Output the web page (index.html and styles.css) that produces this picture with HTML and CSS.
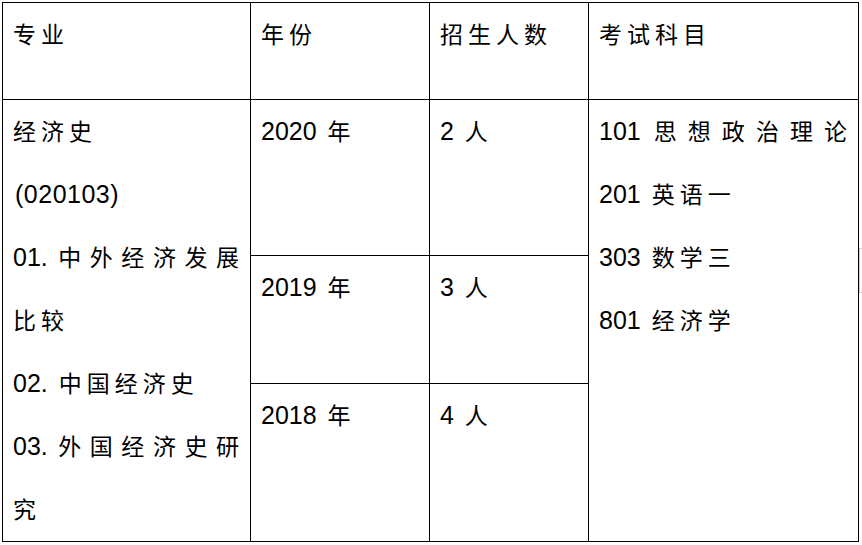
FILE: index.html
```html
<!DOCTYPE html>
<html lang="zh-CN">
<head>
<meta charset="utf-8">
<title>招生计划</title>
<link rel="stylesheet" href="styles.css">
</head>
<body>
<table class="plan">
  <colgroup>
    <col class="c-major">
    <col class="c-year">
    <col class="c-count">
    <col class="c-exam">
  </colgroup>
  <thead>
    <tr class="r-head">
      <th><span class="zh">专业</span></th>
      <th><span class="zh">年份</span></th>
      <th><span class="zh">招生人数</span></th>
      <th><span class="zh">考试科目</span></th>
    </tr>
  </thead>
  <tbody>
    <tr class="r-2020">
      <td rowspan="3" class="major">
        <p><span class="zh">经济史</span></p>
        <p class="code">(020103)</p>
        <p class="wrap">01. <span class="zh">中外经济发展比较</span></p>
        <p>02. <span class="zh gap">中国经济史</span></p>
        <p class="wrap">03. <span class="zh">外国经济史研究</span></p>
      </td>
      <td><p>2020 <span class="zh gap">年</span></p></td>
      <td><p>2 <span class="zh gap">人</span></p></td>
      <td rowspan="3" class="exam">
        <p class="just">101 <span class="zh">思想政治理论</span></p>
        <p>201 <span class="zh gap">英语一</span></p>
        <p>303 <span class="zh gap">数学三</span></p>
        <p>801 <span class="zh gap">经济学</span></p>
      </td>
    </tr>
    <tr class="r-2019">
      <td><p>2019 <span class="zh gap">年</span></p></td>
      <td><p>3 <span class="zh gap">人</span></p></td>
    </tr>
    <tr class="r-2018">
      <td><p>2018 <span class="zh gap">年</span></p></td>
      <td><p>4 <span class="zh gap">人</span></p></td>
    </tr>
  </tbody>
</table>
<div class="mark mark-side"></div>
<div class="mark mark-foot"></div>
</body>
</html>
```

FILE: styles.css
```css
html, body {
  margin: 0;
  padding: 0;
  background: #ffffff;
}

body {
  padding: 2px 0 0 2px;
  font-family: "Liberation Sans", "Noto Sans CJK SC", sans-serif;
  font-size: 25px;
  color: #000000;
  position: relative;
  height: 543px;
  overflow: hidden;
  box-sizing: border-box;
}

.plan {
  border-collapse: collapse;
  table-layout: fixed;
  width: 856px;
}

.c-major { width: 248px; }
.c-year { width: 179px; }
.c-count { width: 159px; }
.c-exam { width: 270px; }

.plan th,
.plan td {
  border: 1px solid #000000;
  vertical-align: top;
  text-align: left;
  font-weight: normal;
  padding: 0 6px 0 10px;
  line-height: 63px;
}

.plan p {
  margin: 0;
}

.zh {
  font-family: "Noto Sans CJK SC", sans-serif;
  font-size: 23px;
  letter-spacing: 5px;
  line-height: 1;
}

.gap {
  margin-left: 4px;
}

.code {
  padding-left: 2px;
  letter-spacing: 0.5px;
}

.r-head th { height: 96px; }
.r-2020 td { height: 155px; }
.r-2019 td { height: 127px; }
.r-2018 td { height: 157px; }

.major p.wrap {
  text-align: justify;
}

.exam {
  padding-right: 8px;
}

.exam p.just {
  text-align: justify;
  text-align-last: justify;
}

.mark {
  position: absolute;
  border: 1px solid #d0d0d0;
}

.mark-side {
  left: 859px;
  top: 248px;
  width: 6px;
  height: 43px;
  border-right: none;
}

.mark-foot {
  left: 408px;
  top: 543px;
  width: 40px;
  height: 6px;
  border-bottom: none;
}
```
